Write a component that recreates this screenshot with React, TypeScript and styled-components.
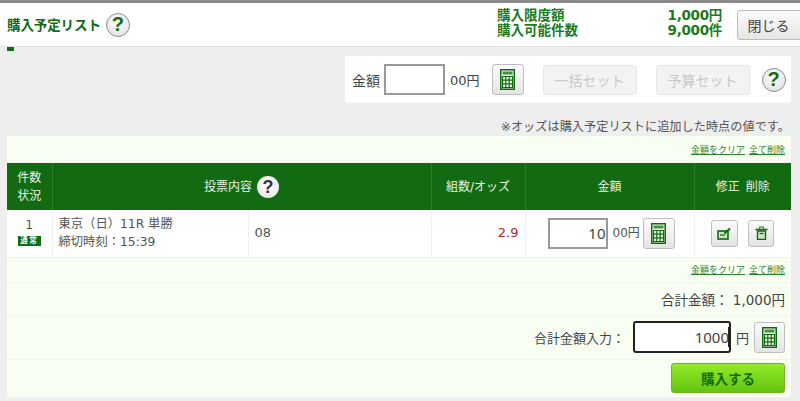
import React from "react";
import styled, { createGlobalStyle } from "styled-components";

const Global = createGlobalStyle`
  html, body { margin: 0; padding: 0; background: #eeeeee; }
  body { font-family: "DejaVu Sans", "Noto Sans CJK JP", sans-serif; color: #444; overflow: hidden; }
  * { box-sizing: border-box; }
`;

const green = "#126a12";

const Page = styled.div`
  width: 800px;
  height: 401px;
  overflow: hidden;
  background: #eeeeee;
`;
const TopStrip = styled.div`
  height: 3px;
  background: #8a8a8a;
`;
const Header = styled.header`
  height: 44px;
  background: #fff;
  border-bottom: 1px solid #e2e2e2;
  display: flex;
  align-items: center;
  padding: 0 0 0 7px;
`;
const Title = styled.h1`
  margin: 0 5px 0 0;
  font-size: 13.5px;
  line-height: 20px;
  font-weight: 700;
  color: ${green};
  letter-spacing: -0.1px;
`;
const Limits = styled.div`
  margin-left: auto;
  display: grid;
  grid-template-columns: 170px 55px;
  font-size: 13.5px;
  line-height: 15px;
  font-weight: 700;
  color: #1d7a1d;
  margin-right: 15px;
  margin-top: -3px;
`;
const LimitValue = styled.span`
  text-align: right;
  white-space: nowrap;
  letter-spacing: -0.3px;
`;
const CloseButton = styled.button`
  width: 67px;
  height: 30px;
  margin-right: -4px;
  font: inherit;
  font-size: 14px;
  color: #444;
  border: 1px solid #bbb;
  border-radius: 3px;
  background: linear-gradient(#fafafa, #e6e6e6);
  padding: 0 4px 0 0;
`;
const Dash = styled.div`
  width: 7px;
  height: 4px;
  margin-left: 7px;
  background: ${green};
`;
const ToolRow = styled.div`
  display: flex;
  justify-content: flex-end;
  padding: 5px 9px 0 0;
`;
const ToolPanel = styled.div`
  width: 446px;
  height: 47px;
  background: #fff;
  border-radius: 3px;
  display: flex;
  align-items: center;
  padding: 0 7px;
  font-size: 14px;
`;
const Label = styled.span`
  margin-right: 4px;
  white-space: nowrap;
`;
const AmountInput = styled.input<{ $w: number; $focus?: boolean }>`
  width: ${(p) => p.$w}px;
  height: ${(p) => (p.$focus ? 32 : 31)}px;
  border: ${(p) => (p.$focus ? "2px solid #222" : "2px solid #999")};
  border-radius: ${(p) => (p.$focus ? 3 : 0)}px;
  text-align: right;
  font-family: "Noto Sans", sans-serif;
  font-size: 15px;
  color: #444;
  padding: 0;
  background: #fff;
  outline: none;
`;
const FocusField = styled.span`
  position: relative;
  display: inline-flex;
`;
const Caret = styled.span`
  position: absolute;
  top: 6px;
  right: 2px;
  width: 1px;
  height: 20px;
  background: #222;
`;
const Unit = styled.span`
  margin-left: 5px;
  font-size: 13px;
  white-space: nowrap;
`;
const IconButton = styled.button<{ $w: number; $h: number }>`
  width: ${(p) => p.$w}px;
  height: ${(p) => p.$h}px;
  border: 1px solid #bdbdbd;
  border-radius: 3px;
  background: linear-gradient(#fbfbfb, #e4e4e4);
  padding: 0;
  display: inline-flex;
  align-items: center;
  justify-content: center;
  flex: none;
`;
const ToolCalc = styled(IconButton)`
  margin-left: 12px;
`;
const TotalCalc = styled(IconButton)`
  margin-left: 5px;
`;
const GhostButton = styled.button<{ $ml: number }>`
  width: 94px;
  height: 30px;
  margin-left: ${(p) => p.$ml}px;
  border: 1px solid #e6e6e6;
  border-radius: 3px;
  background: #f3f3f3;
  font: inherit;
  font-size: 14px;
  color: #c8c8c8;
  padding: 0;
  flex: none;
`;
const HelpBubble = styled.span<{ $size: number; $fs: number; $ml: number }>`
  width: ${(p) => p.$size}px;
  height: ${(p) => p.$size}px;
  margin-left: ${(p) => p.$ml}px;
  border-radius: 50%;
  border: 1px solid #8c8c8c;
  background: radial-gradient(circle at 50% 35%, #fff, #dcdcdc);
  color: ${green};
  font-family: "Liberation Sans", sans-serif;
  font-weight: 700;
  font-size: ${(p) => p.$fs}px;
  display: inline-flex;
  align-items: center;
  justify-content: center;
  flex: none;
`;
const DarkHelp = styled(HelpBubble)`
  color: #333;
  border: none;
  background: radial-gradient(circle at 50% 35%, #fff, #e4e4e4);
`;
const Note = styled.p`
  margin: 0;
  height: 33px;
  padding: 15px 10px 0 0;
  text-align: right;
  font-size: 12.2px;
  line-height: 18px;
  color: #555;
  white-space: nowrap;
`;
const Sheet = styled.section`
  width: 784px;
  margin-left: 7px;
  background: #f8fff2;
`;
const LinkRow = styled.div<{ $h: number }>`
  height: ${(p) => p.$h}px;
  display: flex;
  justify-content: flex-end;
  align-items: center;
  gap: 4px;
  padding: 0 6px 0 0;
  border-bottom: 1px solid #f0f7e8;
`;
const SmallLink = styled.a`
  font-size: 9px;
  color: #2c8030;
  text-decoration: underline;
  white-space: nowrap;
`;
const Table = styled.table`
  width: 784px;
  border-collapse: collapse;
  table-layout: fixed;
`;
const Th = styled.th`
  height: 47px;
  background: ${green};
  color: #e8f3e0;
  font-size: 12px;
  font-weight: 400;
  line-height: 18px;
  border-left: 1px solid #2f8030;
  padding: 0;
  &:first-child { border-left: none; }
`;
const ThInner = styled.span`
  display: inline-flex;
  align-items: center;
  gap: 5px;
`;
const Spaced = styled.span`
  word-spacing: 2px;
`;
const Td = styled.td<{ $align?: string }>`
  height: 47px;
  background: #fff;
  border-left: 1px solid #f0f0f0;
  border-bottom: 1px solid #eef3e8;
  font-size: 12.3px;
  line-height: 18px;
  color: #555;
  padding: 0 6px;
  text-align: ${(p) => p.$align || "left"};
  white-space: nowrap;
  &:first-child { border-left: none; }
`;
const CountNum = styled.span`
  display: block;
  line-height: 14px;
  margin-top: -2px;
`;
const Badge = styled.span`
  display: block;
  width: 23px;
  height: 10px;
  margin: 4px auto 0;
  background: ${green};
  color: #fff;
  font-size: 7.5px;
  line-height: 10px;
  letter-spacing: 1.5px;
  font-weight: 700;
  text-align: center;
`;
const Odds = styled.span`
  color: #b3272d;
  font-size: 13px;
`;
const Selection = styled.span`
  font-size: 13px;
`;
const AmountCell = styled.div`
  display: flex;
  align-items: center;
  padding-left: 16px;
`;
const AmountUnit = styled.span`
  font-size: 12px;
  margin: 0 3px 0 5px;
`;
const Actions = styled.div`
  display: flex;
  align-items: center;
  justify-content: center;
  gap: 10px;
`;
const TotalRow = styled.div<{ $h: number }>`
  height: ${(p) => p.$h}px;
  display: flex;
  justify-content: flex-end;
  align-items: center;
  padding-right: 6px;
  border-bottom: 1px solid #eef5e6;
  font-size: 13.5px;
  color: #444;
  white-space: nowrap;
`;
const TotalInputLabel = styled.span`
  margin-right: 8px;
  font-size: 13px;
`;
const BuyButton = styled.button`
  width: 114px;
  height: 30px;
  border: 1px solid #6fb021;
  border-radius: 3px;
  background: linear-gradient(#93ea28, #63c40f);
  color: #126a12;
  font: inherit;
  font-size: 13.5px;
  font-weight: 700;
  padding: 0;
`;

const Calc = () => (
  <svg width="15" height="21" viewBox="0 0 15 21" aria-hidden="true">
    <rect x="0.75" y="0.75" width="13.5" height="19.5" fill="#f3f9ee" stroke="#0f6a0f" strokeWidth="1.5" />
    <rect x="2.5" y="2.5" width="10" height="3" fill="#0f6a0f" opacity="0.75" />
    <path d="M2.5 7.5h10v11h-10z M2.5 11.2h10 M2.5 14.9h10 M5.8 7.5v11 M9.2 7.5v11" fill="none" stroke="#0f6a0f" strokeWidth="1.2" />
  </svg>
);
const EditIcon = () => (
  <svg width="15" height="13" viewBox="0 0 15 13" aria-hidden="true">
    <rect x="1" y="4" width="10" height="8" fill="#cfe6c4" stroke="#0f6a0f" strokeWidth="1.6" />
    <path d="M3 8h5" stroke="#0f6a0f" strokeWidth="1.2" />
    <path d="M7.5 6.5L13 1.5" stroke="#0f6a0f" strokeWidth="2" />
  </svg>
);
const TrashIcon = () => (
  <svg width="13" height="14" viewBox="0 0 13 14" aria-hidden="true">
    <path d="M0.5 3.5h12" stroke="#0f6a0f" strokeWidth="1.6" />
    <path d="M4.5 2.5V1h4v1.5" fill="none" stroke="#0f6a0f" strokeWidth="1" />
    <path d="M2.5 5h8v8.5h-8z" fill="#cfe6c4" stroke="#0f6a0f" strokeWidth="1.4" />
    <path d="M4.5 7.5h4" stroke="#0f6a0f" strokeWidth="1.2" />
  </svg>
);

export default function App() {
  return (
    <Page>
      <Global />
      <TopStrip />
      <Header>
        <Title>購入予定リスト</Title>
        <HelpBubble $size={24} $fs={20} $ml={0}>?</HelpBubble>
        <Limits>
          <span>購入限度額</span>
          <LimitValue>1,000円</LimitValue>
          <span>購入可能件数</span>
          <LimitValue>9,000件</LimitValue>
        </Limits>
        <CloseButton>閉じる</CloseButton>
      </Header>
      <Dash />
      <ToolRow>
        <ToolPanel>
          <Label>金額</Label>
          <AmountInput $w={61} />
          <Unit>00円</Unit>
          <ToolCalc $w={32} $h={31}><Calc /></ToolCalc>
          <GhostButton $ml={19}>一括セット</GhostButton>
          <GhostButton $ml={19}>予算セット</GhostButton>
          <HelpBubble $size={24} $fs={20} $ml={12}>?</HelpBubble>
        </ToolPanel>
      </ToolRow>
      <Note>※オッズは購入予定リストに追加した時点の値です。</Note>
      <Sheet>
        <LinkRow $h={27}>
          <SmallLink>金額をクリア</SmallLink>
          <SmallLink>全て削除</SmallLink>
        </LinkRow>
        <Table>
          <colgroup>
            <col width="45" />
            <col width="196" />
            <col width="183" />
            <col width="94" />
            <col width="169" />
            <col width="97" />
          </colgroup>
          <thead>
            <tr>
              <Th>件数<br />状況</Th>
              <Th colSpan={2}>
                <ThInner>
                  投票内容
                  <DarkHelp $size={22} $fs={18} $ml={0}>?</DarkHelp>
                </ThInner>
              </Th>
              <Th>組数/オッズ</Th>
              <Th>金額</Th>
              <Th><Spaced>修正 削除</Spaced></Th>
            </tr>
          </thead>
          <tbody>
            <tr>
              <Td $align="center"><CountNum>1</CountNum><Badge>通常</Badge></Td>
              <Td>東京（日）11R 単勝<br />締切時刻：15:39</Td>
              <Td><Selection>08</Selection></Td>
              <Td $align="right"><Odds>2.9</Odds></Td>
              <Td>
                <AmountCell>
                  <AmountInput $w={60} defaultValue="10" />
                  <AmountUnit>00円</AmountUnit>
                  <IconButton $w={32} $h={31}><Calc /></IconButton>
                </AmountCell>
              </Td>
              <Td>
                <Actions>
                  <IconButton $w={27} $h={27}><EditIcon /></IconButton>
                  <IconButton $w={26} $h={27}><TrashIcon /></IconButton>
                </Actions>
              </Td>
            </tr>
          </tbody>
        </Table>
        <LinkRow $h={25}>
          <SmallLink>金額をクリア</SmallLink>
          <SmallLink>全て削除</SmallLink>
        </LinkRow>
        <TotalRow $h={33}>合計金額： 1,000円</TotalRow>
        <TotalRow $h={44}>
          <TotalInputLabel>合計金額入力：</TotalInputLabel>
          <FocusField>
            <AmountInput $w={98} $focus defaultValue="1000" />
            <Caret />
          </FocusField>
          <Unit>円</Unit>
          <TotalCalc $w={31} $h={31}><Calc /></TotalCalc>
        </TotalRow>
        <TotalRow $h={38}><BuyButton>購入する</BuyButton></TotalRow>
      </Sheet>
    </Page>
  );
}
